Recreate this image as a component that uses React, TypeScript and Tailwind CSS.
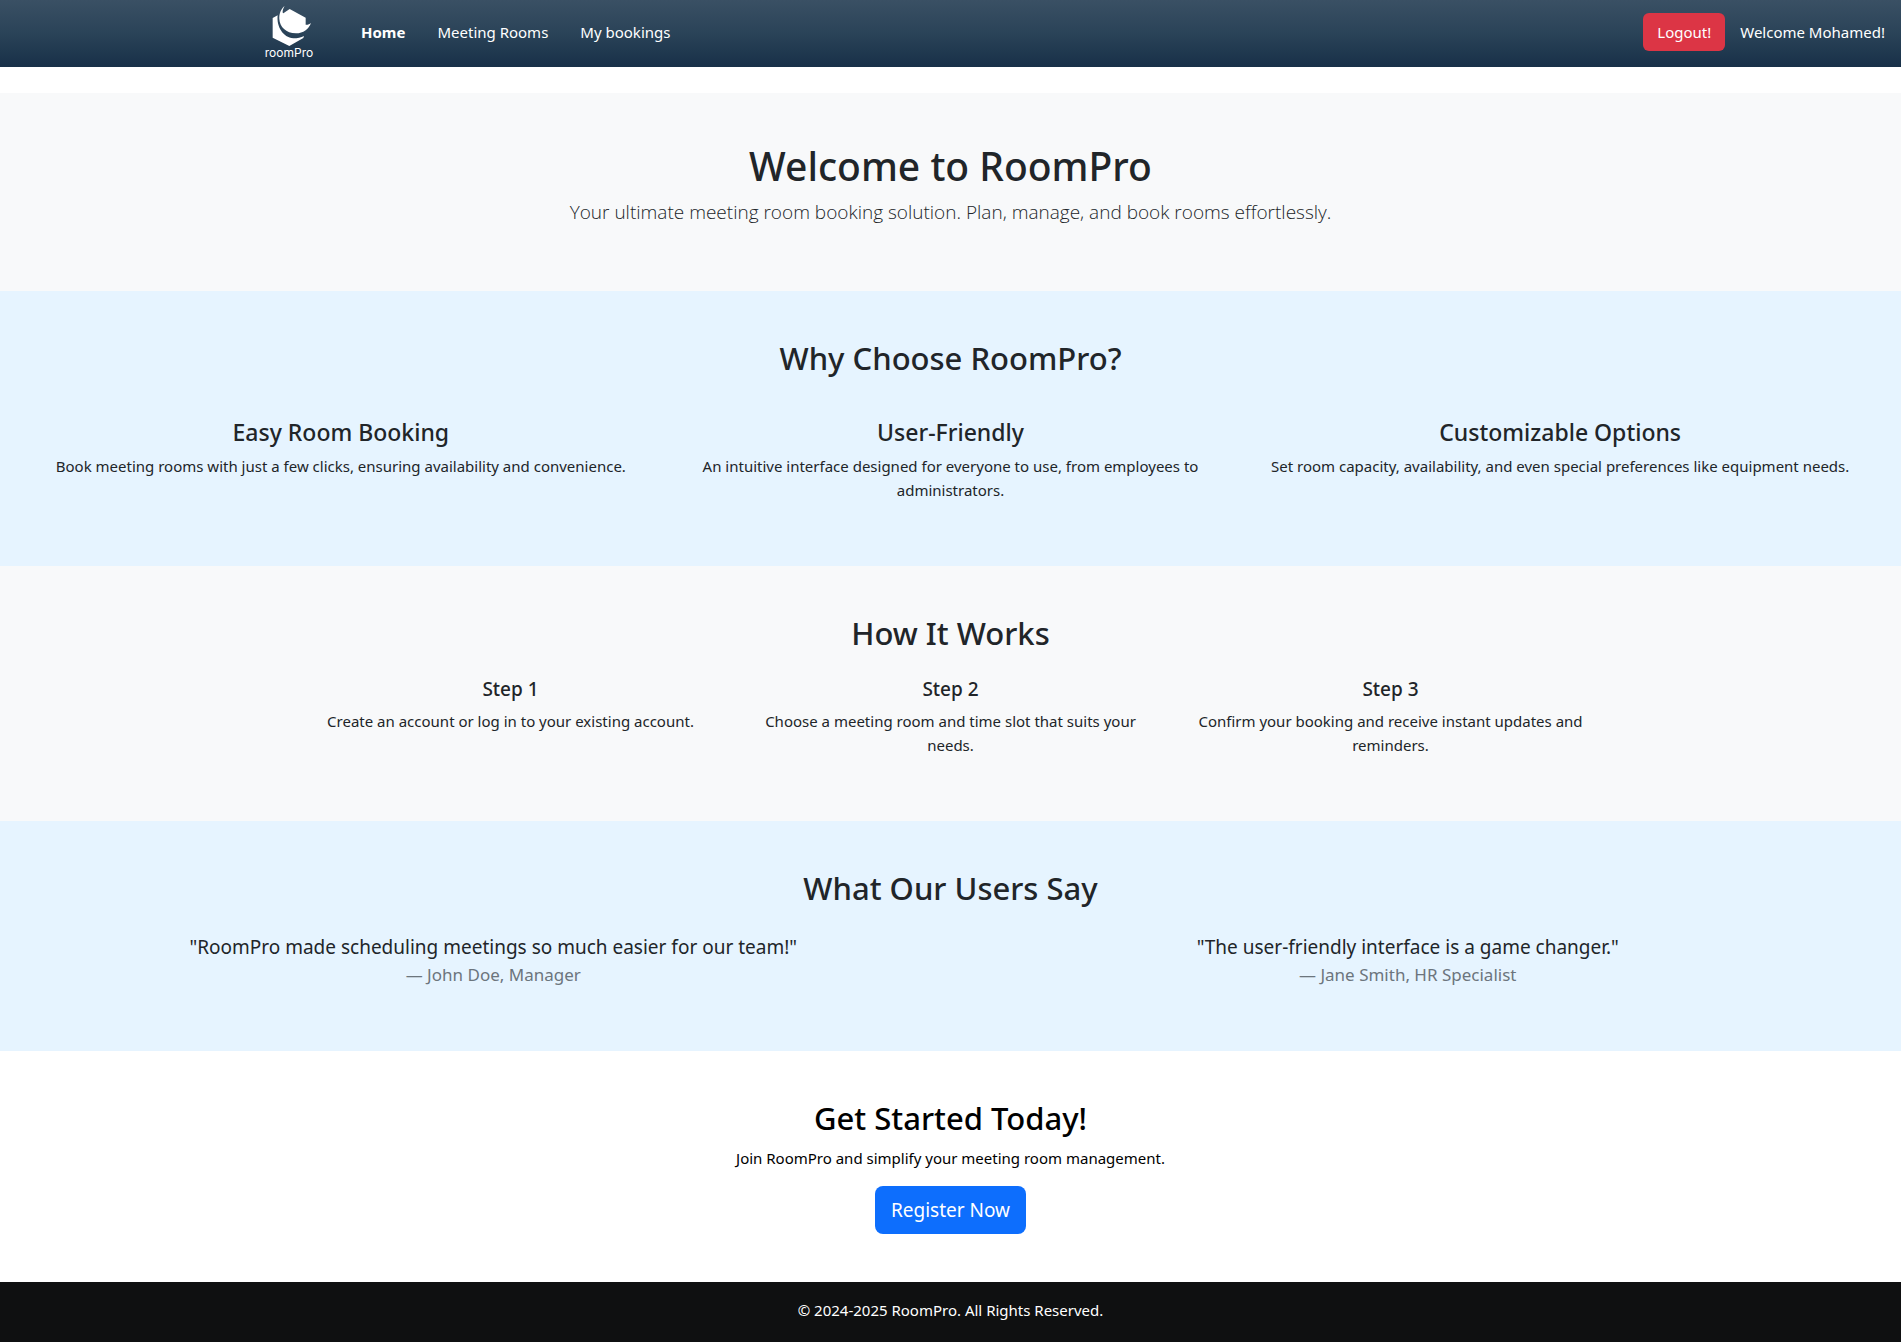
import React from 'react';

const features = [
  { title: 'Easy Room Booking', text: 'Book meeting rooms with just a few clicks, ensuring availability and convenience.' },
  { title: 'User-Friendly', text: 'An intuitive interface designed for everyone to use, from employees to administrators.' },
  { title: 'Customizable Options', text: 'Set room capacity, availability, and even special preferences like equipment needs.' },
];

const steps = [
  { title: 'Step 1', text: 'Create an account or log in to your existing account.' },
  { title: 'Step 2', text: 'Choose a meeting room and time slot that suits your needs.' },
  { title: 'Step 3', text: 'Confirm your booking and receive instant updates and reminders.' },
];

const quotes = [
  { text: '"RoomPro made scheduling meetings so much easier for our team!"', author: '— John Doe, Manager' },
  { text: '"The user-friendly interface is a game changer."', author: '— Jane Smith, HR Specialist' },
];

function Logo() {
  return (
    <a href="#" className="flex w-12 flex-col items-center" aria-label="roomPro home">
      <svg viewBox="75 12 144 126" className="h-[42px] w-12" fill="#fff" aria-hidden="true">
        <path d="M134 15C127 26 127 36 130 37L149 24L197 50V71C202 72 208 70 213 66C206 84 190 97 168 97C138 97 119 77 118 54C117 38 123 23 134 15Z" />
        <path d="M98 51L113 43C109 76 129 110 160 112C173 112 183 109 192 105L190 111L148 135L98 110Z" />
      </svg>
      <span className="font-['Inter'] text-[12px] leading-3">roomPro</span>
    </a>
  );
}

function Heading({ children, className = '' }: { children: React.ReactNode; className?: string }) {
  return <h2 className={`text-[31px] leading-[39px] font-medium ${className}`}>{children}</h2>;
}

export default function App() {
  return (
    <div className="bg-white font-['Noto_Sans',sans-serif] text-[15px] leading-6 text-[#212529]">
      <header className="mb-[26px] flex h-[67px] items-center bg-linear-to-b from-[#3a5064] via-[#2a4358] to-[#183048] pr-4 pb-1 pl-[265px] text-white">
        <Logo />
        <nav className="ml-12 flex gap-8">
          <a href="#" className="font-bold" aria-current="page">Home</a>
          <a href="#">Meeting Rooms</a>
          <a href="#">My bookings</a>
        </nav>
        <div className="ml-auto flex items-center gap-[15px]">
          <button type="button" className="h-[38px] rounded-md bg-[#dc3545] px-3.5">Logout!</button>
          <span>Welcome Mohamed!</span>
        </div>
      </header>

      <main className="text-center">
        <section className="bg-[#f8f9fa] pt-12 pb-16">
          <h1 className="mb-1.5 text-[39px] leading-[50px] font-medium">Welcome to RoomPro</h1>
          <p className="font-['Open_Sans',sans-serif] text-[19px] leading-[30px] font-light">
            Your ultimate meeting room booking solution. Plan, manage, and book rooms effortlessly.
          </p>
        </section>

        <section className="bg-[#e6f4ff] px-9 pt-12 pb-16">
          <Heading className="mb-10">Why Choose RoomPro?</Heading>
          <div className="grid grid-cols-3">
            {features.map((f) => (
              <div key={f.title} className="px-3">
                <h3 className="mb-2 text-[23px] leading-7 font-medium">{f.title}</h3>
                <p>{f.text}</p>
              </div>
            ))}
          </div>
        </section>

        <section className="bg-[#f8f9fa] pt-12 pb-16">
          <Heading className="mb-6">How It Works</Heading>
          <div className="mx-auto grid max-w-[1320px] grid-cols-3">
            {steps.map((s) => (
              <div key={s.title} className="px-3">
                <h3 className="mb-2 text-[19px] leading-6 font-medium">{s.title}</h3>
                <p>{s.text}</p>
              </div>
            ))}
          </div>
        </section>

        <section className="bg-[#e6f4ff] px-9 pt-12 pb-16">
          <Heading className="mb-6">What Our Users Say</Heading>
          <div className="grid grid-cols-2">
            {quotes.map((q) => (
              <blockquote key={q.author} className="px-3">
                <p className="text-[19px] leading-[30px]">{q.text}</p>
                <footer className="text-[17px] leading-[25px] text-[#6c757d]">{q.author}</footer>
              </blockquote>
            ))}
          </div>
        </section>

        <section className="py-12 text-black">
          <Heading className="mb-2">Get Started Today!</Heading>
          <p className="mb-4">Join RoomPro and simplify your meeting room management.</p>
          <button type="button" className="h-12 rounded-lg bg-[#0d6efd] px-4 text-[19px] text-white">Register Now</button>
        </section>
      </main>

      <footer className="bg-[#0f1011] pt-4 pb-5 text-center text-white">
        <p>© 2024-2025 RoomPro. All Rights Reserved.</p>
      </footer>
    </div>
  );
}
